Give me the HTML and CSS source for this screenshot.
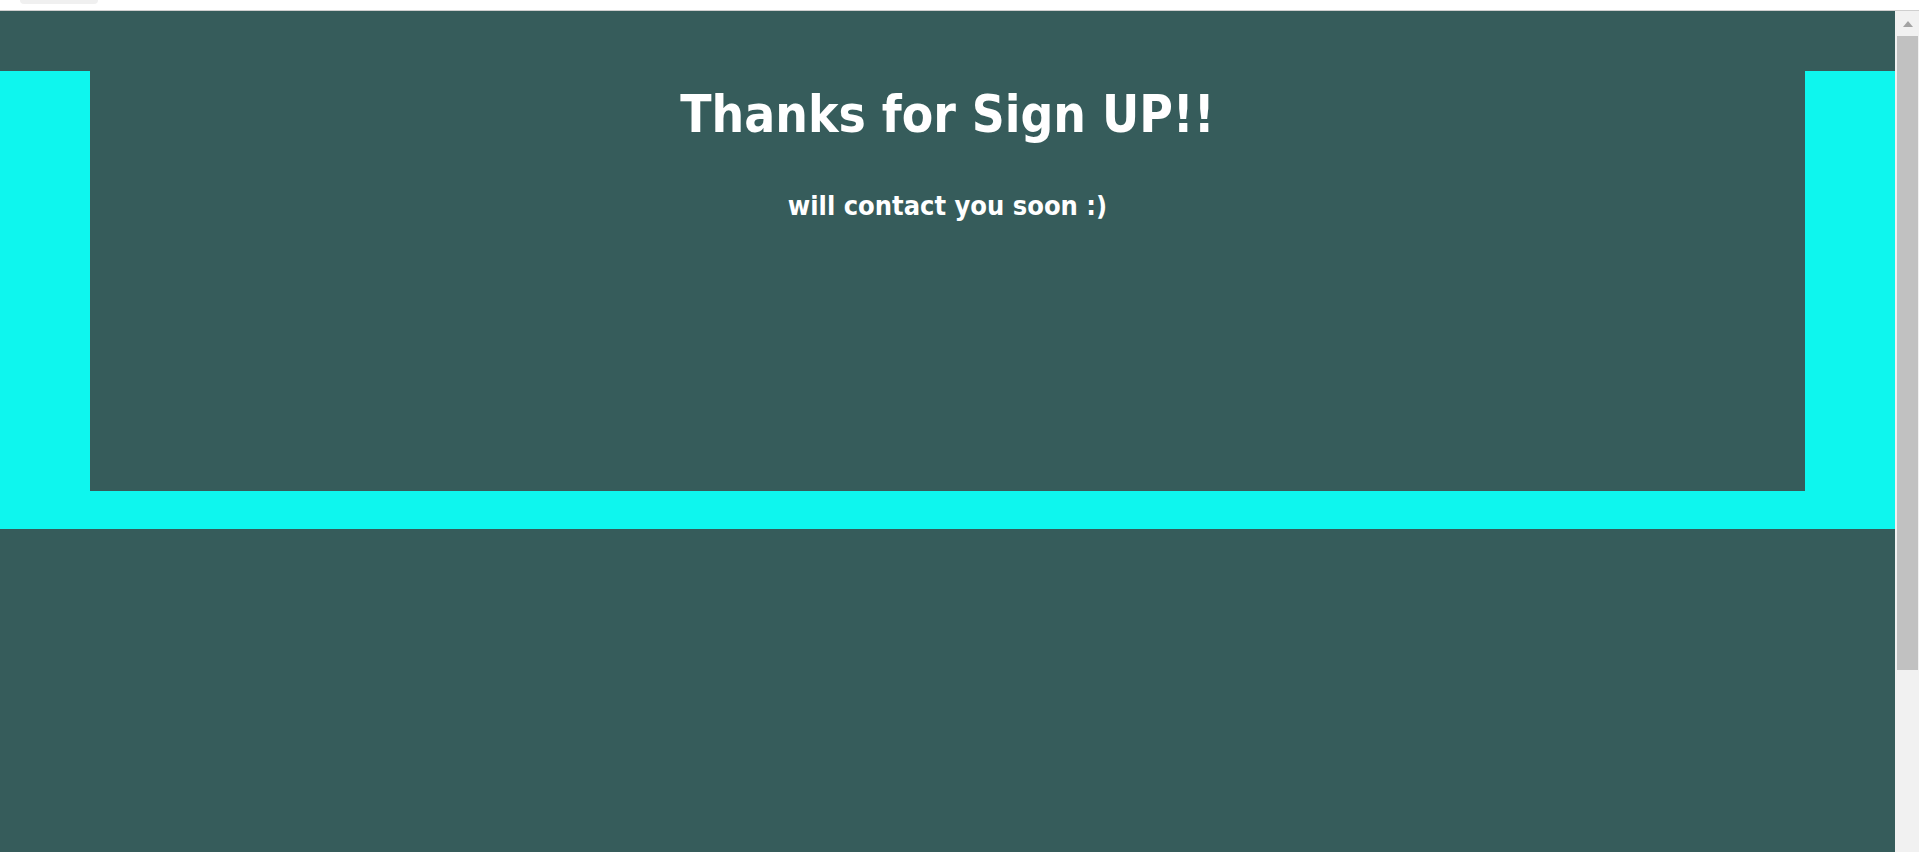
FILE: index.html
```html
<!DOCTYPE html>
<html lang="en">
<head>
<meta charset="utf-8">
<title>Thanks for Sign UP!!</title>
<link rel="stylesheet" href="styles.css">
</head>
<body>
  <div class="chrome">
    <div class="chrome-pill"></div>
  </div>
  <div class="viewport">
    <main class="page">
      <section class="band">
        <div class="panel">
          <h1 class="title">Thanks for Sign UP!!</h1>
          <h3 class="subtitle">will contact you soon :)</h3>
        </div>
      </section>
    </main>
    <div class="scrollbar">
      <div class="scroll-arrow">
        <svg width="10" height="6" viewBox="0 0 10 6"><path d="M0 6 L5 0 L10 6 Z" fill="#a3a3a3"/></svg>
      </div>
      <div class="scroll-thumb"></div>
    </div>
  </div>
</body>
</html>
```
FILE: styles.css
```css
html, body {
  margin: 0;
  padding: 0;
  height: 100%;
  overflow: hidden;
}
body {
  display: flex;
  flex-direction: column;
  background: #365c5b;
  font-family: "Comic Sans MS", "Liberation Sans Narrow", "DejaVu Sans Condensed", "Liberation Sans", sans-serif;
}
.chrome {
  height: 10px;
  flex: none;
  background: #ffffff;
  border-bottom: 1px solid #cfcfcf;
  padding-left: 20px;
}
.chrome-pill {
  width: 78px;
  height: 4px;
  background: #f0f0f0;
  border-radius: 0 0 10px 10px;
}
.viewport {
  flex: 1;
  display: flex;
  min-height: 0;
}
.page {
  flex: 1;
  background: #365c5b;
  padding-top: 60px;
}
.band {
  background: #0ef6ee;
  padding: 0 90px 38px 90px;
}
.panel {
  height: 420px;
  background: #365c5b;
  box-sizing: border-box;
  padding: 18px 0 0 0;
  display: flex;
  flex-direction: column;
  align-items: center;
  color: #ffffff;
}
.title {
  margin: 0;
  font-size: 51px;
  line-height: 1;
  font-weight: bold;
}
.subtitle {
  margin: 52px 0 0 0;
  font-size: 27px;
  line-height: 1;
  font-weight: bold;
}
.scrollbar {
  width: 24px;
  flex: none;
  background: #f1f1f1;
  display: flex;
  flex-direction: column;
  align-items: flex-end;
}
.scroll-arrow {
  width: 24px;
  height: 25px;
  display: flex;
  justify-content: center;
  align-items: center;
}
.scroll-arrow svg {
  margin-left: 1px;
}
.scroll-thumb {
  width: 21px;
  margin-right: 1px;
  height: 634px;
  background: #c1c1c1;
}
```
